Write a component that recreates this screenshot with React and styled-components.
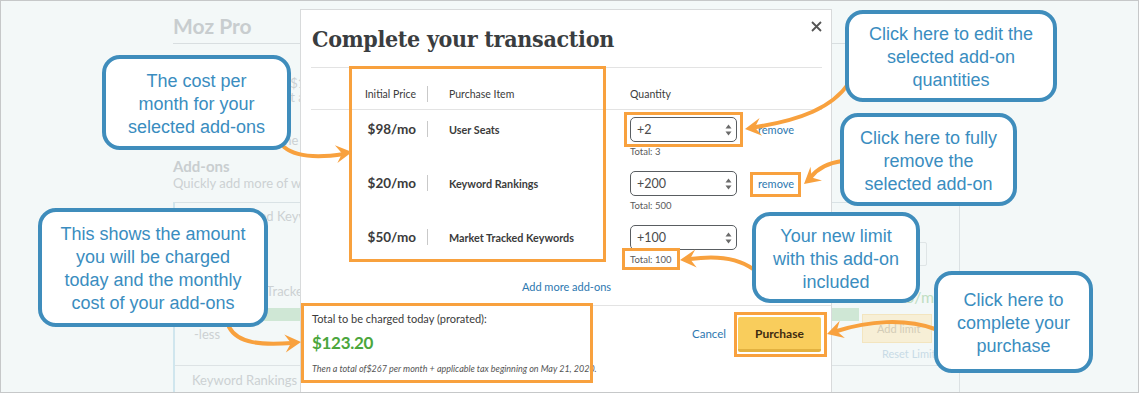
import React from "react";
import styled, { createGlobalStyle } from "styled-components";

const GlobalStyle = createGlobalStyle`
  html, body {
    margin: 0;
    padding: 0;
    background: #fff;
  }
  body {
    font-family: Lato, "Open Sans", sans-serif;
  }
`;

const ORANGE = "#f8a13e";
const CALLOUT_BLUE = "#3f8dbc";

const Frame = styled.div`
  position: relative;
  width: 1139px;
  height: 393px;
  overflow: hidden;
  background: #f3f8f8;
  font-family: Lato, sans-serif;

  &::after {
    content: "";
    position: absolute;
    inset: 0;
    border: 1px solid #c6c8c9;
    pointer-events: none;
    z-index: 20;
  }
`;

/* faded page behind the modal */

const Page = styled.div`
  margin-left: 173px;
  width: 787px;
  padding-top: 13px;
  color: #ccd1d3;
`;

const PageTitle = styled.h1`
  margin: 0;
  font: 700 21px/26px Lato, sans-serif;
  color: #c8cdcf;
  padding-bottom: 4px;
  border-bottom: 1px solid #d8dee0;
`;

// text the modal covers is cut at the modal's left edge
const Clipped = styled.div`
  width: ${(p) => p.$w}px;
  margin-top: ${(p) => p.$mt || 0}px;
  margin-left: ${(p) => p.$ml || 0}px;
  overflow: hidden;
  white-space: nowrap;
  font-size: 13px;
  line-height: ${(p) => p.$lh || 14}px;
`;

const SectionTitle = styled.h2`
  margin: 10px 0 0;
  font: 700 15px/18px Lato, sans-serif;
  color: #c9ced0;
`;

const AddonCard = styled.div`
  margin-top: 11px;
  border-top: 1px solid #d9e2e5;
  border-left: 2px solid #d0e6ee;
  border-right: 1px solid #dbe1e3;
  min-height: 200px;
`;

const CardRow = styled.div`
  display: grid;
  grid-template-columns: 1fr 84px;
  padding: 0 16px 0 11px;
  height: ${(p) => p.$h}px;
  border-bottom: ${(p) => (p.$divider ? "1px solid #dde3e5" : "none")};
  font-size: 13px;
`;

const CardMain = styled.div`
  display: flex;
  flex-direction: column;
`;

const FadedBar = styled.div`
  margin-top: ${(p) => p.$mt || 0}px;
  height: 13px;
  background: #cfe7d5;
  margin-left: 6px;
`;

const CardSide = styled.div`
  display: flex;
  flex-direction: column;
  align-items: flex-start;
`;

const FadedInput = styled.div`
  margin-top: 39px;
  width: 68px;
  height: 24px;
  box-sizing: border-box;
  border: 1px solid #dfe5e6;
  border-radius: 2px;
  display: flex;
  align-items: center;
  justify-content: flex-end;
  padding-right: 9px;
  font-size: 8px;
  color: #c9cfd1;
`;

const FadedPrice = styled.div`
  margin-top: 22px;
  margin-left: 46px;
  font-size: 16px;
  line-height: 18px;
  color: #bfdec2;
`;

const FadedButton = styled.div`
  margin-top: 8px;
  margin-left: 3px;
  width: 70px;
  height: 29px;
  box-sizing: border-box;
  background: #f7efd6;
  border: 1px solid #f3e5bf;
  display: flex;
  align-items: center;
  padding-left: 14px;
  font-size: 11px;
  color: #d3ccb7;
`;

const FadedLink = styled.div`
  margin-top: 5px;
  margin-left: 23px;
  font-size: 11px;
  line-height: 12px;
  color: #c8dbe6;
`;

/* the modal */

const Modal = styled.div`
  position: absolute;
  left: 300px;
  top: 9px;
  width: 532px;
  height: 392px;
  box-sizing: border-box;
  background: #fff;
  border: 1px solid #d8dadb;
  padding: 0 9px 0 10px;
  display: flex;
  flex-direction: column;
  color: #3c3c3c;
  z-index: 2;
`;

const ModalHeader = styled.div`
  display: flex;
  justify-content: space-between;
  align-items: flex-start;
  height: 57px;
  border-bottom: 1px solid #e3e3e3;
`;

const Title = styled.h2`
  margin: 14px 0 0 1px;
  font-family: "DejaVu Serif Condensed", "DejaVu Serif", serif;
  font-stretch: condensed;
  font-weight: 700;
  font-size: 23px;
  line-height: 30px;
  color: #3a3d40;
  letter-spacing: -0.3px;
`;

const CloseButton = styled.button`
  margin-top: 11px;
  padding: 0;
  border: none;
  background: none;
  width: 11px;
  height: 11px;
  display: flex;
`;

const TableRow = styled.div`
  display: grid;
  grid-template-columns: 116px 1px 202px 1fr;
  padding-top: ${(p) => (p.$head ? 19 : 7)}px;
  box-sizing: border-box;
  border-bottom: ${(p) => (p.$head ? "1px solid #e3e3e3" : "none")};
  height: ${(p) => (p.$head ? 42 : 54)}px;
  align-items: start;
`;

const PriceCell = styled.div`
  text-align: right;
  padding-right: 11px;
  font-size: ${(p) => (p.$head ? "10.5px" : "13.5px")};
  font-weight: ${(p) => (p.$head ? 400 : 700)};
  line-height: ${(p) => (p.$head ? "14px" : "25px")};
  color: #3b3b3b;
`;

const ItemCell = styled.div`
  padding-left: 21px;
  font-size: ${(p) => (p.$head ? "10.5px" : "10.8px")};
  font-weight: ${(p) => (p.$head ? 400 : 700)};
  line-height: ${(p) => (p.$head ? "14px" : "25px")};
  color: #3b3b3b;
`;

const Sep = styled.div`
  background: #c9c9c9;
  height: 16px;
  margin-top: ${(p) => (p.$head ? -1 : 4)}px;
`;

const QtyHead = styled.div`
  font-size: 10.5px;
  line-height: 14px;
  color: #3b3b3b;
`;

const QtyCell = styled.div`
  display: flex;
  flex-direction: column;
`;

const QtyLine = styled.div`
  display: flex;
  align-items: center;
`;

const Select = styled.div`
  width: 107px;
  height: 25px;
  box-sizing: border-box;
  border: 1px solid #595d61;
  border-radius: 5px;
  display: flex;
  align-items: center;
  justify-content: space-between;
  padding: 0 4px 0 6px;
  font-size: 12.5px;
  color: #4b4b4b;
`;

const RemoveLink = styled.a`
  margin-left: 21px;
  font-size: 11px;
  color: #2d78b0;
  text-decoration: none;
`;

const TotalNote = styled.div`
  margin-top: 4px;
  font-size: 9.5px;
  line-height: 12px;
  color: #5a5a5a;
`;

const AddMore = styled.a`
  display: block;
  text-align: center;
  padding: 8px 0 11px;
  font-size: 11px;
  line-height: 14px;
  color: #2d78b0;
  text-decoration: none;
`;

const Footer = styled.div`
  margin: 0 -9px 0 -10px;
  padding: 0 10px 0 11px;
  border-top: 1px solid #e3e3e3;
  display: flex;
  justify-content: space-between;
  align-items: flex-start;
`;

const TotalBlock = styled.div`
  padding-top: 6px;
  display: flex;
  flex-direction: column;
`;

const TotalLabel = styled.div`
  font-size: 11px;
  line-height: 14px;
  color: #3b3b3b;
`;

const TotalAmount = styled.div`
  margin-top: 5px;
  font-size: 17px;
  font-weight: 700;
  line-height: 24px;
  color: #4ba63c;
  letter-spacing: -0.3px;
`;

const TotalFine = styled.div`
  margin-top: 8px;
  font-size: 9px;
  font-style: italic;
  line-height: 12px;
  color: #555;
`;

const Actions = styled.div`
  margin-top: 11px;
  display: flex;
  align-items: center;
`;

const CancelLink = styled.a`
  font-size: 11.5px;
  color: #2d78b0;
  text-decoration: none;
  margin-bottom: 2px;
`;

const PurchaseButton = styled.button`
  margin-left: 12px;
  width: 83px;
  height: 35px;
  box-sizing: border-box;
  border: none;
  border-bottom: 3px solid #e2b140;
  border-radius: 2px;
  background: #f9cd5c;
  font-family: Lato, sans-serif;
  font-weight: 700;
  font-size: 12px;
  color: #3e2b10;
  padding: 0;
`;

/* annotations */

const Highlight = styled.div`
  position: absolute;
  left: ${(p) => p.$x}px;
  top: ${(p) => p.$y}px;
  width: ${(p) => p.$w}px;
  height: ${(p) => p.$h}px;
  box-sizing: border-box;
  border: 3px solid ${ORANGE};
  z-index: 3;
`;

const Callout = styled.div`
  position: absolute;
  left: ${(p) => p.$x}px;
  top: ${(p) => p.$y}px;
  width: ${(p) => p.$w}px;
  height: ${(p) => p.$h}px;
  box-sizing: border-box;
  display: flex;
  align-items: center;
  justify-content: center;
  padding-top: 3px;
  border: 4px solid ${CALLOUT_BLUE};
  border-radius: 18px;
  background: #fff;
  color: #3a8dc0;
  font-family: "Liberation Sans", Arial, sans-serif;
  font-size: 18px;
  line-height: 23px;
  text-align: center;
  z-index: 5;
`;

const ArrowLayer = styled.svg`
  position: absolute;
  left: 0;
  top: 0;
  width: 1139px;
  height: 393px;
  z-index: 4;
  pointer-events: none;
`;

function headPoints(tx, ty, deg) {
  const a = (deg * Math.PI) / 180;
  const dx = Math.cos(a);
  const dy = Math.sin(a);
  const L = 16;
  const W = 9;
  const N = 10;
  const bx = tx - dx * L;
  const by = ty - dy * L;
  const px = -dy;
  const py = dx;
  return [
    [tx, ty],
    [bx + px * W, by + py * W],
    [tx - dx * N, ty - dy * N],
    [bx - px * W, by - py * W],
  ]
    .map((p) => p.map((v) => v.toFixed(1)).join(","))
    .join(" ");
}

const arrows = [
  { d: "M284,147 C296,157 318,158 344,154", tip: [352, 152], deg: -8 },
  { d: "M849,83 C832,108 800,120 756,127", tip: [745, 129], deg: 172 },
  { d: "M842,161 C828,163 818,168 811,177", tip: [804, 184], deg: 140 },
  { d: "M753,269 C738,258 718,255 690,259", tip: [680, 260], deg: 175 },
  { d: "M935,329 C905,318 868,321 837,331", tip: [827, 334], deg: 163 },
  { d: "M229,327 C238,344 262,345 292,343", tip: [301, 342], deg: -5 },
];

const rows = [
  { price: "$98/mo", item: "User Seats", qty: "+2", total: "Total: 3", remove: true },
  { price: "$20/mo", item: "Keyword Rankings", qty: "+200", total: "Total: 500", remove: true },
  { price: "$50/mo", item: "Market Tracked Keywords", qty: "+100", total: "Total: 100", remove: false },
];

function Spinner() {
  return (
    <svg width="7" height="12" viewBox="0 0 7 12">
      <polygon points="3.5,0.5 6.5,4.5 0.5,4.5" fill="#6a6a6a" />
      <polygon points="0.5,7.5 6.5,7.5 3.5,11.5" fill="#6a6a6a" />
    </svg>
  );
}

function BackgroundPage() {
  return (
    <Page>
      <PageTitle>Moz Pro</PageTitle>
      <Clipped $w={67} $ml={60} $mt={32}>Plan total $179.00</Clipped>
      <Clipped $w={67} $ml={60}>Next bill at a later date</Clipped>
      <Clipped $w={67} $ml={60} $mt={29}>Change the plan</Clipped>
      <SectionTitle>Add-ons</SectionTitle>
      <Clipped $w={127} $lh={16}>Quickly add more of what you need</Clipped>
      <AddonCard>
        <CardRow $h={162} $divider>
          <CardMain>
            <Clipped $w={114} $mt={5} $lh={16}>Market Tracked Keywords</Clipped>
            <Clipped $w={104} $mt={59} $ml={10} $lh={16}>Add Market Tracked Keywords</Clipped>
            <FadedBar $mt={9} />
            <Clipped $w={100} $mt={5} $ml={8} $lh={16}>-less</Clipped>
          </CardMain>
          <CardSide>
            <FadedInput>▲</FadedInput>
            <FadedPrice>0/mo</FadedPrice>
            <FadedButton>Add limit</FadedButton>
            <FadedLink>Reset Limits</FadedLink>
          </CardSide>
        </CardRow>
        <CardRow $h={40}>
          <CardMain>
            <Clipped $w={108} $mt={6} $ml={6} $lh={16}>Keyword Rankings | 0 of 300</Clipped>
          </CardMain>
        </CardRow>
      </AddonCard>
    </Page>
  );
}

export default function App() {
  return (
    <Frame>
      <GlobalStyle />
      <BackgroundPage />

      <Modal>
        <ModalHeader>
          <Title>Complete your transaction</Title>
          <CloseButton aria-label="Close">
            <svg width="11" height="11" viewBox="0 0 11 11">
              <path d="M1 1 L10 10 M10 1 L1 10" stroke="#555" strokeWidth="1.8" />
            </svg>
          </CloseButton>
        </ModalHeader>

        <TableRow $head>
          <PriceCell $head>Initial Price</PriceCell>
          <Sep $head />
          <ItemCell $head>Purchase Item</ItemCell>
          <QtyHead>Quantity</QtyHead>
        </TableRow>

        {rows.map((r) => (
          <TableRow key={r.item}>
            <PriceCell>{r.price}</PriceCell>
            <Sep />
            <ItemCell>{r.item}</ItemCell>
            <QtyCell>
              <QtyLine>
                <Select>
                  <span>{r.qty}</span>
                  <Spinner />
                </Select>
                {r.remove && <RemoveLink href="#">remove</RemoveLink>}
              </QtyLine>
              <TotalNote>{r.total}</TotalNote>
            </QtyCell>
          </TableRow>
        ))}

        <AddMore href="#">Add more add-ons</AddMore>

        <Footer>
          <TotalBlock>
            <TotalLabel>Total to be charged today (prorated):</TotalLabel>
            <TotalAmount>$123.20</TotalAmount>
            <TotalFine>
              Then a total of$267 per month + applicable tax beginning on May 21, 2020.
            </TotalFine>
          </TotalBlock>
          <Actions>
            <CancelLink href="#">Cancel</CancelLink>
            <PurchaseButton>Purchase</PurchaseButton>
          </Actions>
        </Footer>
      </Modal>

      <Highlight $x={349} $y={66} $w={257} $h={196} />
      <Highlight $x={624} $y={112} $w={119} $h={35} />
      <Highlight $x={750} $y={172} $w={51} $h={25} />
      <Highlight $x={622} $y={248} $w={58} $h={22} />
      <Highlight $x={301} $y={303} $w={292} $h={80} />
      <Highlight $x={734} $y={312} $w={93} $h={45} />

      <ArrowLayer viewBox="0 0 1139 393">
        {arrows.map((a, i) => (
          <g key={i}>
            <path d={a.d} fill="none" stroke={ORANGE} strokeWidth="4" strokeLinecap="round" />
            <polygon points={headPoints(a.tip[0], a.tip[1], a.deg)} fill={ORANGE} />
          </g>
        ))}
      </ArrowLayer>

      <Callout $x={102} $y={55} $w={189} $h={95}>
        <div>
          The cost per
          <br />
          month for your
          <br />
          selected add-ons
        </div>
      </Callout>
      <Callout $x={38} $y={208} $w={230} $h={119}>
        <div>
          This shows the amount
          <br />
          you will be charged
          <br />
          today and the monthly
          <br />
          cost of your add-ons
        </div>
      </Callout>
      <Callout $x={845} $y={10} $w={212} $h={92}>
        <div>
          Click here to edit the
          <br />
          selected add-on
          <br />
          quantities
        </div>
      </Callout>
      <Callout $x={840} $y={113} $w={177} $h={93}>
        <div>
          Click here to fully
          <br />
          remove the
          <br />
          selected add-on
        </div>
      </Callout>
      <Callout $x={752} $y={212} $w={168} $h={91}>
        <div>
          Your new limit
          <br />
          with this add-on
          <br />
          included
        </div>
      </Callout>
      <Callout $x={934} $y={271} $w={159} $h={102}>
        <div>
          Click here to
          <br />
          complete your
          <br />
          purchase
        </div>
      </Callout>
    </Frame>
  );
}
